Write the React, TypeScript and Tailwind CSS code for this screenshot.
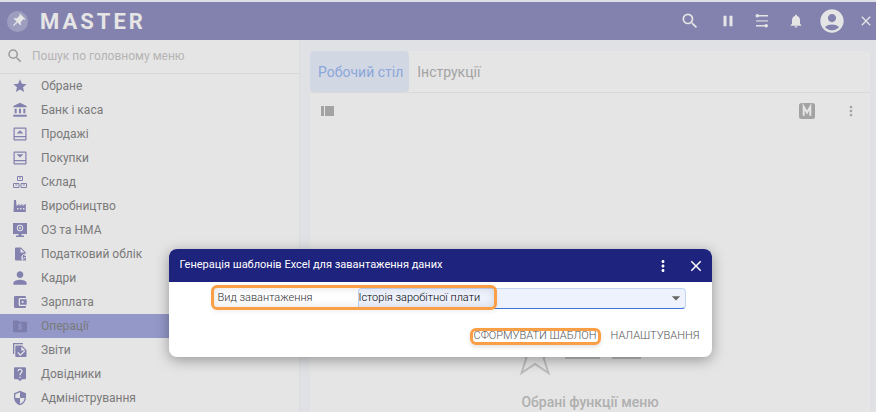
import type { ReactNode } from "react"
import {
  MdAccountBalance,
  MdAccountBalanceWallet,
  MdAccountCircle,
  MdArrowDropDown,
  MdClose,
  MdLiveHelp,
  MdMoreVert,
  MdNotifications,
  MdPause,
  MdPerson,
  MdPushPin,
  MdSearch,
  MdSecurity,
  MdStar,
} from "react-icons/md"

interface MenuItem {
  label: string
  icon: ReactNode
  active?: boolean
}

function Glyph({ children }: { children: ReactNode }) {
  return (
    <svg viewBox="0 0 14 14" className="size-3.5" fill="currentColor" aria-hidden="true">
      {children}
    </svg>
  )
}

const SalesIcon = () => (
  <Glyph>
    <path fillRule="evenodd" d="M1.5.5h11a1 1 0 0 1 1 1v11a1 1 0 0 1-1 1h-11a1 1 0 0 1-1-1v-11a1 1 0 0 1 1-1ZM1.700 1.700V9h10.600V1.700ZM1.700 10.200v2h10.600v-2Z" />
    <path d="M3.600 6.400 7 3.200l3.400 3.200Z" />
  </Glyph>
)

const PurchaseIcon = () => (
  <Glyph>
    <path fillRule="evenodd" d="M1.5.5h11a1 1 0 0 1 1 1v11a1 1 0 0 1-1 1h-11a1 1 0 0 1-1-1v-11a1 1 0 0 1 1-1ZM1.700 1.700V9h10.600V1.700ZM1.700 10.200v2h10.600v-2Z" />
    <path d="M3.600 3.200h6.800L7 6.600Z" />
  </Glyph>
)

const StockIcon = () => (
  <Glyph>
    <g fill="none" stroke="currentColor" strokeWidth="1">
      <path d="M4.500 1.500h5v4h-5ZM.5 8.500h5.500v4H.5ZM8 8.500h5.500v4H8Z" />
      <path d="M6 3h2M2.300 10h2M9.800 10h2" />
    </g>
  </Glyph>
)

const FactoryIcon = () => (
  <Glyph>
    <path fillRule="evenodd" d="M1 1h2l.6 6L6.500 4.800V7l3-2.200V7L12.800 4.800V13H.5ZM4 9v1.500h1.400V9Zm3 0v1.500h1.400V9Zm3 0v1.500h1.400V9Z" />
  </Glyph>
)

const AssetsIcon = () => (
  <Glyph>
    <path fillRule="evenodd" d="M0 0h14v11H8.500v1.500H11V14H3v-1.500h2.500V11H0ZM7 1.800a3.200 3.200 0 1 0 0 6.400 3.200 3.200 0 0 0 0-6.400Z" />
    <path fillRule="evenodd" d="M7 2.700a2.300 2.300 0 1 1 0 4.600 2.300 2.300 0 0 1 0-4.600Zm0 1.300a1 1 0 1 0 0 2 1 1 0 0 0 0-2Z" />
  </Glyph>
)

const TaxIcon = () => (
  <Glyph>
    <path fillRule="evenodd" d="M3 .5h5L12.500 5v2.200a3.500 3.500 0 0 0-2.700 6.300H3a1 1 0 0 1-1-1v-11a1 1 0 0 1 1-1ZM7.500 1.500v4h4Z" />
    <path d="M10 8h1.600v1H13v1.200h-2v.7h2v2.600h-3v-1.200h1.700v-.7H9.800V9H10Z" />
  </Glyph>
)

const OperationsIcon = () => (
  <Glyph>
    <path d="M0 2.500a1 1 0 0 1 1-1h4l1.500 1.300H13a1 1 0 0 1 1 1v8.400a1 1 0 0 1-1 1H1a1 1 0 0 1-1-1Z" />
    <path d="M8.800 5.500H6.500a1 1 0 0 0 0 2.200h1a1 1 0 0 1 0 2.300H5.200M7 4.300v7" fill="none" stroke="#9398c8" strokeWidth="1" />
  </Glyph>
)

const ReportsIcon = () => (
  <Glyph>
    <path d="M0 0h10v1.300H1.300V11H0Z" />
    <path fillRule="evenodd" d="M3.300 2.500H9L13.500 7v6a1 1 0 0 1-1 1H3.300a1 1 0 0 1-1-1V3.500a1 1 0 0 1 1-1ZM8.300 3.500v4h4.200ZM4.300 10l3 3 4.700-4.400-.9-.9-3.800 3.500-2.100-2.100Z" />
  </Glyph>
)

const menu: MenuItem[] = [
  { label: "Обране", icon: <MdStar className="size-4" /> },
  { label: "Банк і каса", icon: <MdAccountBalance className="size-4" /> },
  { label: "Продажі", icon: <SalesIcon /> },
  { label: "Покупки", icon: <PurchaseIcon /> },
  { label: "Склад", icon: <StockIcon /> },
  { label: "Виробництво", icon: <FactoryIcon /> },
  { label: "ОЗ та НМА", icon: <AssetsIcon /> },
  { label: "Податковий облік", icon: <TaxIcon /> },
  { label: "Кадри", icon: <MdPerson className="size-5" /> },
  { label: "Зарплата", icon: <MdAccountBalanceWallet className="size-4" /> },
  { label: "Операції", icon: <OperationsIcon />, active: true },
  { label: "Звіти", icon: <ReportsIcon /> },
  { label: "Довідники", icon: <MdLiveHelp className="size-4" /> },
  { label: "Адміністрування", icon: <MdSecurity className="size-4" /> },
]

function Header() {
  return (
    <header className="flex h-10 shrink-0 items-center border-t-2 border-[#dedfe6] bg-[#8382ae] pr-0.5 pl-[7px] text-[#e5e5e5]">
      <button aria-label="Закріпити меню" className="flex size-[21px] items-center justify-center rounded-full bg-[#9d9dbf]">
        <MdPushPin className="size-4 rotate-45" />
      </button>
      <h1 className="ml-3 font-[Roboto,sans-serif] text-[22px] font-bold tracking-[3px]">MASTER</h1>
      <div className="ml-auto flex items-center">
        <button aria-label="Пошук" className="flex w-9 justify-center">
          <MdSearch className="size-5" />
        </button>
        <button aria-label="Пауза" className="flex w-10 justify-center">
          <MdPause className="size-[18px]" />
        </button>
        <button aria-label="Параметри" className="flex w-7 justify-center">
          <svg viewBox="0 0 14 14" className="size-3.5" fill="currentColor" aria-hidden="true">
            <path d="M2 1h11v1.400H2ZM1 11h11v1.400H1Z" />
            <path d="M1 6h12v1.800H1Z" opacity=".6" />
            <circle cx="2.300" cy="1.800" r="1.800" />
            <circle cx="11.200" cy="11.800" r="1.800" />
          </svg>
        </button>
        <button aria-label="Сповіщення" className="flex w-10 justify-center">
          <MdNotifications className="size-4" />
        </button>
        <button aria-label="Профіль" className="flex w-8 justify-center">
          <MdAccountCircle className="size-7" />
        </button>
        <button aria-label="Закрити" className="ml-2.5 flex w-4 justify-center">
          <MdClose className="size-4" />
        </button>
      </div>
    </header>
  )
}

function Sidebar() {
  return (
    <aside className="w-[300px] shrink-0 border-r border-[#dbdcde] bg-[#e5e5e5]">
      <label className="flex h-[34px] items-center gap-2 border-b border-[#d8d8d8] pb-px pl-1.5">
        <MdSearch className="size-[18px] shrink-0 text-[#9c9c9c]" />
        <input
          type="text"
          aria-label="Пошук по головному меню"
          placeholder="Пошук по головному меню"
          className="w-full bg-transparent text-xs outline-none placeholder:text-[#b4b4b4]"
        />
      </label>
      <nav>
        {menu.map((item) => (
          <a
            key={item.label}
            href="#"
            className={`flex h-6 items-center pl-2.5 text-xs text-[#7a7a7a] ${item.active ? "bg-[#9398c8]" : ""}`}
          >
            <span className={`mr-[11px] flex w-5 justify-center ${item.active ? "text-[#7d7dab]" : "text-[#8382ae]"}`}>
              {item.icon}
            </span>
            {item.label}
          </a>
        ))}
      </nav>
    </aside>
  )
}

function Workspace() {
  return (
    <main className="flex min-w-0 flex-1 bg-[#dfe1e4] pt-[11px] pr-1.5 pl-2.5">
      <section className="flex-1 rounded-t bg-[#e5e5e5]">
        <div className="flex h-[42px] border-b border-[#d9d9d9] text-sm">
          <button className="h-[41px] rounded bg-[#d2d8e3] pr-1.5 pl-2 text-[#8aa6da]">Робочий стіл</button>
          <button className="px-2 text-[#a3a3a3]">Інструкції</button>
        </div>
        <div className="flex h-9 items-center px-[11px] text-[#a3a3a3]">
          <button aria-label="Вигляд панелі">
            <svg viewBox="0 0 13 10" className="h-2.5 w-[13px]" fill="currentColor" aria-hidden="true">
              <path d="M0 0h3v10H0ZM4 0h9v10H4Z" />
            </svg>
          </button>
          <button aria-label="MASTER" className="ml-auto">
            <svg viewBox="0 0 16 16" className="size-4" aria-hidden="true">
              <rect width="16" height="16" rx="2.500" fill="#a3a3a3" />
              <path d="M4.700 12.800V3.800L8 9.500l3.300-5.700v9" fill="none" stroke="#e5e5e5" strokeWidth="2" />
            </svg>
          </button>
          <button aria-label="Меню панелі" className="ml-7">
            <MdMoreVert className="size-4" />
          </button>
        </div>
        <div className="flex flex-col items-center pt-[203px] text-[#afafaf]">
          <svg viewBox="0 0 160 44" className="h-11 w-40" fill="none" stroke="#bdbdbd" strokeWidth="2" aria-hidden="true">
            <path d="m25 1 5.300 14.700 15.700.5-12.400 9.600L38.500 41 25 32 11.500 41l4.900-15.200L4 16.200l15.700-.5Z" />
            <path d="M55 26h35M102 26h29" />
          </svg>
          <p className="mt-4 text-sm font-medium">Обрані функції меню</p>
        </div>
      </section>
    </main>
  )
}

function TemplateDialog() {
  return (
    <div className="absolute top-[249px] right-0 left-1 flex justify-center">
      <div
        role="dialog"
        aria-labelledby="dialog-title"
        className="w-[543px] overflow-hidden rounded-lg bg-white shadow-[0_3px_14px_rgba(0,0,0,0.35)]"
      >
        <div className="flex h-[33px] items-center bg-[#1e237e] pr-[7px] pl-[11px] text-white">
          <h2 id="dialog-title" className="text-[11px] font-normal">
            Генерація шаблонів Excel для завантаження даних
          </h2>
          <button aria-label="Дії" className="ml-auto">
            <MdMoreVert className="size-[18px]" />
          </button>
          <button aria-label="Закрити вікно" className="ml-[15px]">
            <MdClose className="size-[18px]" />
          </button>
        </div>
        <form className="pb-3">
          <div className="relative flex items-center pt-1.5 pr-[26px] pl-[49px]">
            <label htmlFor="kind" className="w-[140px] text-[11px] font-light text-[#333]">
              Вид завантаження
            </label>
            <div className="relative flex-1">
              <select
                id="kind"
                className="block h-[21px] w-full appearance-none rounded-sm border border-[#c3d5f3] border-b-[#3a74d4] bg-[#edf2fc] pr-5 text-[11px] font-light text-black outline-none"
              >
                <option>Історія заробітної плати</option>
              </select>
              <MdArrowDropDown className="pointer-events-none absolute top-0 right-0 size-5 text-[#666]" />
            </div>
            <span className="pointer-events-none absolute top-[3px] left-[42px] h-[25px] w-[286px] rounded-md border-3 border-[#fa9f45] shadow-[inset_0_0_10px_rgba(0,0,0,0.12),0_2px_4px_rgba(0,0,0,0.06)]" />
          </div>
          <div className="mt-[19px] flex justify-end gap-3.5 pr-3 text-[11px] font-light text-[#555]">
            <button type="button" className="relative">
              СФОРМУВАТИ ШАБЛОН
              <span className="pointer-events-none absolute -inset-x-1 inset-y-0 rounded-md border-3 border-[#fa9f45] shadow-[0_2px_4px_rgba(0,0,0,0.12)]" />
            </button>
            <button type="button">НАЛАШТУВАННЯ</button>
          </div>
        </form>
      </div>
    </div>
  )
}

export default function App() {
  return (
    <div className="relative flex h-screen flex-col overflow-hidden bg-[#dfe1e4] font-[Roboto,sans-serif]">
      <Header />
      <div className="flex min-h-0 flex-1">
        <Sidebar />
        <Workspace />
      </div>
      <TemplateDialog />
    </div>
  )
}
